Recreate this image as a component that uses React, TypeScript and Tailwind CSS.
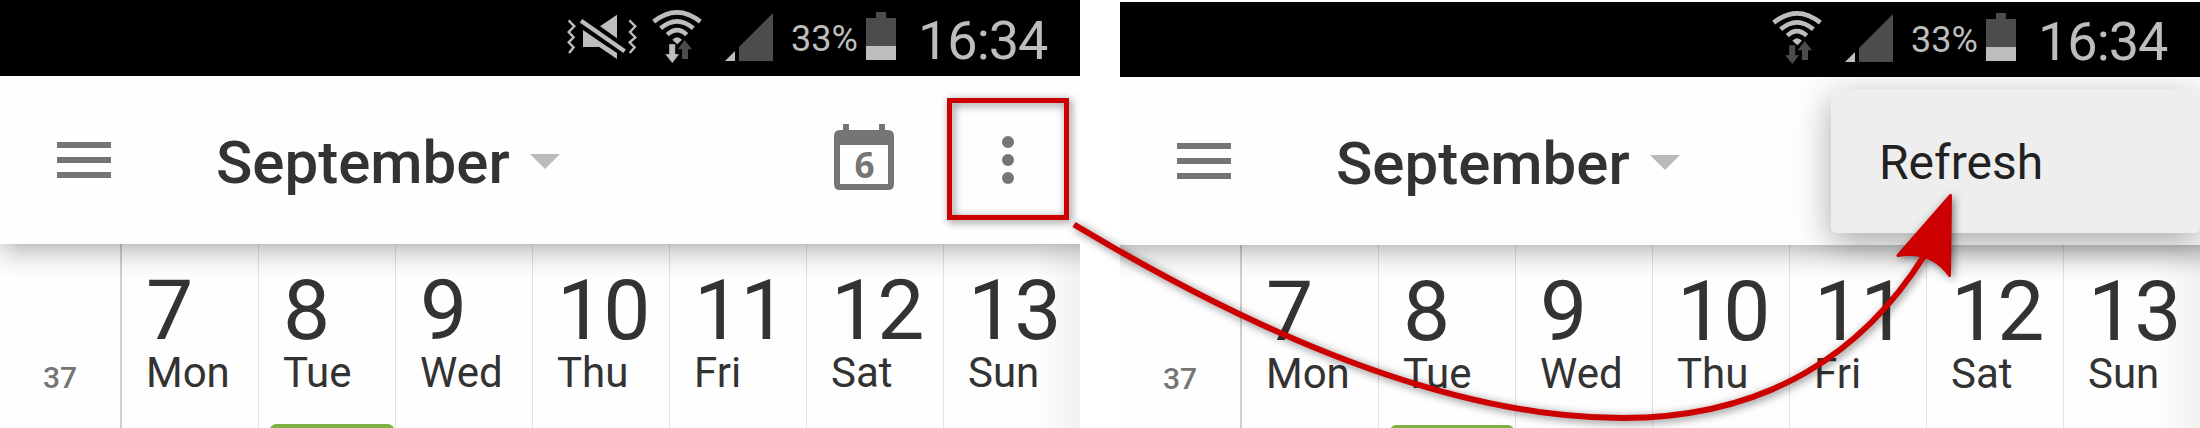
import React from "react";

const days = [
  { date: "7", name: "Mon" },
  { date: "8", name: "Tue", event: true },
  { date: "9", name: "Wed" },
  { date: "10", name: "Thu" },
  { date: "11", name: "Fri" },
  { date: "12", name: "Sat" },
  { date: "13", name: "Sun" },
];

function VibrateMuteIcon() {
  return (
    <svg className="h-[76px] w-[75px] shrink-0" viewBox="75 0 225 228" fill="#bdbdbd">
      <path d="M180 79 L231 44 V115 Z" />
      <path d="M129 90 L178 124 L231 159 V177 L178 141 H129 Z" />
      <path d="M123 62 L254 154" stroke="#000" strokeWidth="25" />
      <path d="M123 62 L254 154" stroke="#bdbdbd" strokeWidth="13" />
      <path d="M86 61 L103 79 L86 96 L101 112 L86 127 L101 142 L87 159" fill="none" stroke="#bdbdbd" strokeWidth="7" />
      <path d="M268 61 L286 79 L270 96 L286 112 L269 127 L284 142 L269 159" fill="none" stroke="#bdbdbd" strokeWidth="7" />
    </svg>
  );
}

function WifiIcon({ receiving }: { receiving: boolean }) {
  return (
    <svg className="ml-[10px] h-[76px] w-[55px] shrink-0" viewBox="330 0 165 228">
      <g fill="none" stroke="#bdbdbd" strokeWidth="14">
        <path d="M341 65 Q411 9 481 65" />
        <path d="M362 85 Q411 43 460 85" />
        <path d="M382 104 Q411 77 440 104" />
      </g>
      <path d="M397 119 Q411 104 426 119 L412 133 Z" fill="#bdbdbd" />
      <path d="M387 132 H406 V162 H418 L397 190 L375 162 H387 Z" fill={receiving ? "#bdbdbd" : "#4c4c4c"} stroke="#000" strokeWidth="1" />
      <path d="M426 177 V148 H413 L434 120 L456 148 H444 V177 Z" fill="#4c4c4c" />
    </svg>
  );
}

function SignalIcon() {
  return (
    <svg className="ml-[19px] h-[76px] w-[50px] shrink-0" viewBox="552 0 150 228">
      <path d="M555 183 L585 153 V183 Z" fill="#bdbdbd" />
      <path d="M597 183 V141 L699 39 V183 Z" fill="#4c4c4c" />
    </svg>
  );
}

function BatteryIcon() {
  return (
    <svg className="h-[76px] w-[30px] shrink-0" viewBox="0 0 30 76">
      <path d="M10 12 H20 V18 H30 V60 H0 V18 H10 Z" fill="#4c4c4c" />
      <path d="M0 46 H30 V60 H0 Z" fill="#bdbdbd" />
    </svg>
  );
}

function StatusBar({ muted, className }: { muted: boolean; className: string }) {
  return (
    <div className={`relative z-20 flex shrink-0 flex-col justify-end overflow-hidden bg-black text-[#bdbdbd] ${className}`}>
      <div className="flex h-[76px] shrink-0 items-start justify-end">
        {muted && <VibrateMuteIcon />}
        <WifiIcon receiving={muted} />
        <SignalIcon />
        <span className="w-[92px] pl-[17px] text-[36px] leading-[79px]">33%</span>
        <BatteryIcon />
        <span className="w-[184px] pl-[22px] text-[54px] leading-[81px] tracking-[-1px]">16:34</span>
      </div>
    </div>
  );
}

function TodayIcon() {
  return (
    <svg className="h-[66px] w-[60px]" viewBox="0 0 60 66">
      <path
        fillRule="evenodd"
        fill="#757575"
        d="M9 0 H15 V6 H45 V0 H51 V6 H54 Q60 6 60 12 V60 Q60 66 54 66 H6 Q0 66 0 60 V12 Q0 6 6 6 H9 Z M6 21 V60 H54 V21 Z"
      />
      <text x="30.5" y="54" textAnchor="middle" fontFamily="Open Sans" fontWeight="700" fontSize="35" fill="#757575">
        6
      </text>
    </svg>
  );
}

function AppBar({ menuOpen }: { menuOpen: boolean }) {
  return (
    <header className="relative flex h-[168px] shrink-0 items-center bg-[#fefefe] pl-[57px]">
      <div className="flex w-[54px] flex-col gap-[9px]">
        <span className="h-[6px] bg-[#757575]" />
        <span className="h-[6px] bg-[#757575]" />
        <span className="h-[6px] bg-[#757575]" />
      </div>
      <h1 className="ml-[105px] w-[314px] pt-[5px] text-[60px] font-medium leading-[72px] text-[#333333]">September</h1>
      <svg className="mt-[3px] h-[15px] w-[30px]" viewBox="0 0 30 15">
        <path d="M0 0 H30 L15 15 Z" fill="#bababa" />
      </svg>
      {!menuOpen && (
        <div className="flex flex-1 items-center">
          <div className="ml-[274px] -mt-[6px]">
            <TodayIcon />
          </div>
          <div className="relative ml-[53px] flex h-[122px] w-[122px] flex-col items-center justify-center gap-[6px]">
            <span className="size-[12px] rounded-full bg-[#757575]" />
            <span className="size-[12px] rounded-full bg-[#757575]" />
            <span className="size-[12px] rounded-full bg-[#757575]" />
            <div className="absolute inset-x-0 -top-px h-[122px] border-[5px] border-[#cc0000] drop-shadow-[2px_2px_4px_rgba(0,0,0,0.5)]" />
          </div>
        </div>
      )}
      {menuOpen && (
        <div className="absolute left-[711px] top-[12px] z-10 flex h-[144px] w-[369px] items-center rounded-[5px] bg-[#eeeeee] pl-[48px] pt-[3px] text-[48px] text-[#212121] shadow-[0_10px_36px_rgba(0,0,0,0.34)]">
          Refresh
        </div>
      )}
    </header>
  );
}

function WeekHeader({ fadeLeft }: { fadeLeft: boolean }) {
  return (
    <section className="relative flex flex-1 overflow-hidden bg-[#fefefe] text-[#333333]">
      <div className="w-[121px] shrink-0 border-r border-[#cfcfcf] pt-[116px] text-center text-[30px] font-medium leading-[36px] text-[#757575]">
        37
      </div>
      {days.map((day, i) => (
        <div
          key={day.date}
          className={`w-[137px] shrink-0 border-l pl-[24px] pt-[29px] ${i === 0 ? "border-[#cfcfcf]" : "border-[#e2e2e2]"}`}
        >
          <div className="text-[84px] leading-[76px] tracking-[-1px]">{day.date}</div>
          <div className="text-[42px] leading-[48px]">{day.name}</div>
          {day.event && <div className="-ml-[13px] mt-[27px] h-[20px] w-[124px] rounded-[6px] bg-[#7cb342]" />}
        </div>
      ))}
      <div className="absolute inset-y-0 right-0 w-[44px] bg-gradient-to-r from-transparent to-black/5" />
      <div
        className={`absolute inset-x-0 top-0 h-[34px] bg-[linear-gradient(to_bottom,rgba(0,0,0,0.22),rgba(0,0,0,0.11)_33%,rgba(0,0,0,0.035)_66%,transparent)] ${
          fadeLeft ? "[mask-image:linear-gradient(to_right,rgba(0,0,0,0.5),black_20px)]" : ""
        }`}
      />
    </section>
  );
}

function Phone({ menuOpen }: { menuOpen: boolean }) {
  return (
    <div className={`relative flex w-[1080px] shrink-0 flex-col overflow-hidden ${menuOpen ? "pt-[2px]" : ""}`}>
      <StatusBar muted={!menuOpen} className={menuOpen ? "h-[75px]" : "h-[76px]"} />
      <div className={menuOpen ? "relative z-10" : "relative"}>
        <AppBar menuOpen={menuOpen} />
      </div>
      <WeekHeader fadeLeft={!menuOpen} />
    </div>
  );
}

function PointerArrow() {
  return (
    <svg
      className="pointer-events-none absolute inset-0 z-30 h-[428px] w-[2200px] drop-shadow-[2px_2px_4px_rgba(0,0,0,0.5)]"
      viewBox="0 0 2200 428"
    >
      <path
        d="M1074 224.5 C1238 323 1440 418 1622 418 C1770 418 1865 350 1924 256"
        fill="none"
        stroke="#cc0000"
        strokeWidth="6"
      />
      <path
        d="M1950.5 195.5 L1898 255.5 Q1932 250 1949.5 275.5 Z"
        fill="#cc0000"
        stroke="#cc0000"
        strokeWidth="3"
        strokeLinejoin="round"
      />
    </svg>
  );
}

export default function App() {
  return (
    <main className="relative flex h-[428px] w-[2200px] gap-[40px] overflow-hidden bg-white font-['Roboto',sans-serif]">
      <Phone menuOpen={false} />
      <Phone menuOpen />
      <PointerArrow />
    </main>
  );
}
